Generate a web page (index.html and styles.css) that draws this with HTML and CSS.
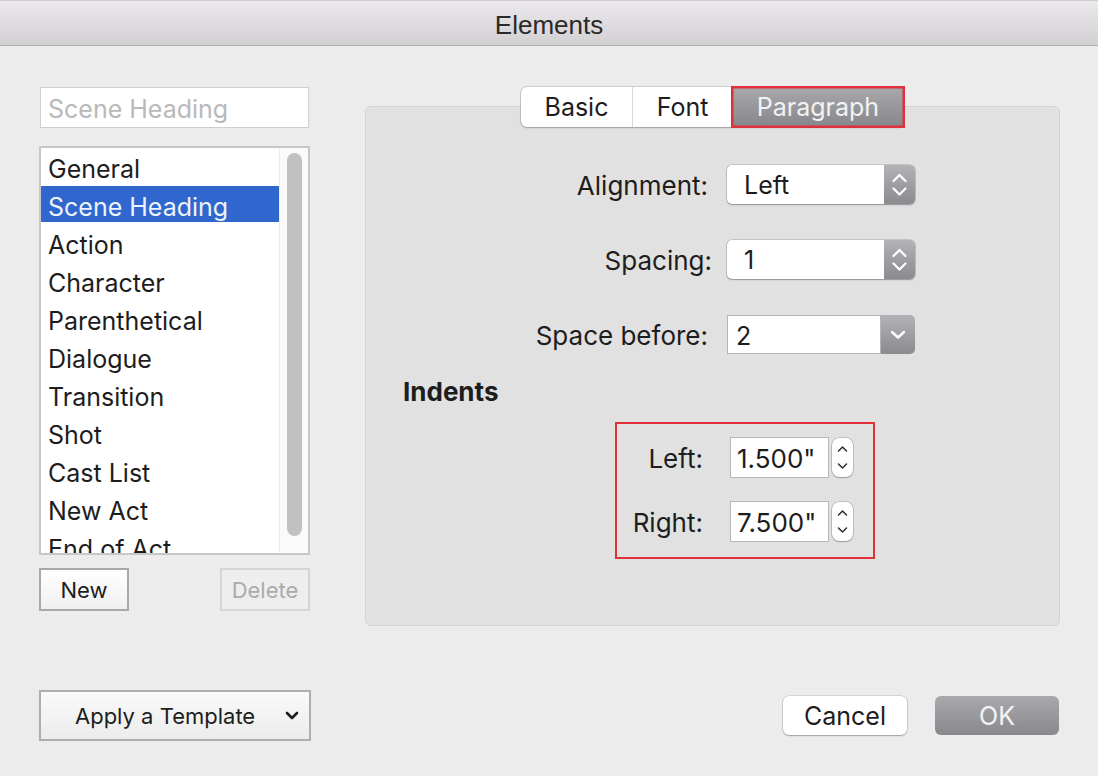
FILE: index.html
```html
<!DOCTYPE html>
<html>
<head>
<meta charset="utf-8">
<title>Elements</title>
<link rel="stylesheet" href="styles.css">
</head>
<body>
<div class="window">
  <header class="titlebar">Elements</header>
  <div class="main">
    <aside class="left">
      <div class="search">Scene Heading</div>
      <div class="list">
        <ul class="items">
          <li>General</li>
          <li class="sel">Scene Heading</li>
          <li>Action</li>
          <li>Character</li>
          <li>Parenthetical</li>
          <li>Dialogue</li>
          <li>Transition</li>
          <li>Shot</li>
          <li>Cast List</li>
          <li>New Act</li>
          <li>End of Act</li>
        </ul>
        <div class="scroll"><div class="thumb"></div></div>
      </div>
      <div class="listbtns">
        <button class="btn">New</button>
        <button class="btn disabled">Delete</button>
      </div>
    </aside>
    <section class="right">
      <div class="tabs">
        <div class="tab basic">Basic</div>
        <div class="tab font">Font</div>
        <div class="tab para">Paragraph</div>
      </div>
      <div class="panel">
        <div class="form">
          <label class="lbl-align">Alignment:</label>
          <div class="popup">
            <span class="val">Left</span>
            <span class="arrows">
              <svg width="31" height="39" viewBox="0 0 31 39"><path d="M9.5 16 L15.5 10 L21.5 16 M9.5 23.5 L15.5 29.5 L21.5 23.5" fill="none" stroke="#fff" stroke-width="2.2" stroke-linecap="round" stroke-linejoin="round"/></svg>
            </span>
          </div>
          <label class="lbl-spacing">Spacing:</label>
          <div class="popup">
            <span class="val">1</span>
            <span class="arrows">
              <svg width="31" height="39" viewBox="0 0 31 39"><path d="M9.5 16 L15.5 10 L21.5 16 M9.5 23.5 L15.5 29.5 L21.5 23.5" fill="none" stroke="#fff" stroke-width="2.2" stroke-linecap="round" stroke-linejoin="round"/></svg>
            </span>
          </div>
          <label class="lbl-before">Space before:</label>
          <div class="combo">
            <span class="val">2</span>
            <span class="down">
              <svg width="34" height="39" viewBox="0 0 34 39"><path d="M11 17 L17 22.5 L23 17" fill="none" stroke="#fff" stroke-width="2.4" stroke-linecap="round" stroke-linejoin="round"/></svg>
            </span>
          </div>
        </div>
        <h3 class="indents-title">Indents</h3>
        <div class="indents">
          <label class="lbl-left">Left:</label>
          <div class="spin">
            <div class="field">1.500"</div>
            <div class="stepper">
              <svg width="21" height="39" viewBox="0 0 21 39"><path d="M6.5 13 L10.5 9 L14.5 13 M6.5 26 L10.5 30 L14.5 26" fill="none" stroke="#333" stroke-width="1.6" stroke-linecap="round" stroke-linejoin="round"/></svg>
            </div>
          </div>
          <label>Right:</label>
          <div class="spin">
            <div class="field">7.500"</div>
            <div class="stepper">
              <svg width="21" height="39" viewBox="0 0 21 39"><path d="M6.5 13 L10.5 9 L14.5 13 M6.5 26 L10.5 30 L14.5 26" fill="none" stroke="#333" stroke-width="1.6" stroke-linecap="round" stroke-linejoin="round"/></svg>
            </div>
          </div>
        </div>
      </div>
    </section>
  </div>
  <footer class="footer">
    <div class="template">
      <span>Apply a Template</span>
      <svg class="chev" width="14" height="9" viewBox="0 0 14 9"><path d="M2 2 L7 7 L12 2" fill="none" stroke="#1d1d1d" stroke-width="2.6" stroke-linecap="round" stroke-linejoin="round"/></svg>
    </div>
    <div class="actions">
      <button class="pbtn cancel">Cancel</button>
      <button class="pbtn ok">OK</button>
    </div>
  </footer>
</div>
</body>
</html>
```
FILE: styles.css
```css
* { box-sizing: border-box; }
html, body { margin: 0; padding: 0; }
body {
  width: 1098px;
  height: 776px;
  overflow: hidden;
  background: #ececec;
  font-family: Inter, "Noto Sans", sans-serif;
  color: #1d1d1d;
}

.titlebar {
  height: 46px;
  padding-top: 5px;
  border-top: 1px solid #cfcdcf;
  border-bottom: 1px solid #b1afb1;
  background: linear-gradient(#ebe9eb, #d2d0d2);
  text-align: center;
  font: 26px/38px "Liberation Sans", sans-serif;
  color: #2a2a2a;
}

.main {
  display: flex;
  padding: 41px 38px 0 39px;
}

/* left column */
.left {
  width: 271px;
  display: flex;
  flex-direction: column;
}
.search {
  height: 41px;
  margin: 0 1px;
  padding: 3px 0 0 7px;
  border: 1px solid #cfcfcf;
  background: #fff;
  font-size: 25px;
  line-height: 36px;
  color: #b9b9b9;
}
.list {
  margin-top: 18px;
  height: 409px;
  border: 2px solid #c7c7c7;
  background: #fff;
  display: flex;
  overflow: hidden;
}
.items {
  list-style: none;
  margin: 0;
  padding: 0;
  flex: 1;
}
.items li {
  height: 36px;
  margin-bottom: 2px;
  line-height: 42px;
  padding-left: 7px;
  font-size: 25px;
  white-space: nowrap;
}
.items li.sel {
  background: #2f67cf;
  color: #eef2fa;
}
.scroll {
  width: 29px;
  background: #fafafa;
  border-left: 1px solid #ececec;
  padding: 5px 6px 0 7px;
}
.thumb {
  height: 383px;
  border-radius: 8px;
  background: #c1c1c1;
}
.listbtns {
  display: flex;
  justify-content: space-between;
  margin-top: 13px;
}
.btn {
  width: 90px;
  height: 43px;
  padding: 0;
  border: 2px solid #a9a9a9;
  background: linear-gradient(#ffffff, #f0f0f0);
  font-family: inherit;
  font-size: 22px;
  color: #1d1d1d;
}
.btn.disabled {
  border-color: #d5d5d5;
  background: #eeeeee;
  color: #ababab;
}

/* right column */
.right {
  flex: 1;
  margin-left: 55px;
  display: flex;
  flex-direction: column;
  align-items: center;
}
.tabs {
  display: flex;
  height: 40px;
  background: #fff;
  border-radius: 6px;
  box-shadow: 0 0 0 1px rgba(0,0,0,0.12), 0 1px 2px rgba(0,0,0,0.2);
  position: relative;
  z-index: 1;
  margin-bottom: -21px;
}
.tab {
  font-size: 25px;
  line-height: 41px;
  text-align: center;
}
.tab.basic { width: 112px; border-right: 1px solid #d9d9d9; }
.tab.font { width: 99px; }
.tab.para {
  width: 172px;
  background: linear-gradient(#a9a9ad, #87878b);
  color: #f2f2f2;
  box-shadow: 0 0 0 1px #e0303a, inset 0 0 0 1.5px #e0303a;
}

.panel {
  width: 695px;
  height: 520px;
  background: #e1e1e1;
  border: 1px solid #d4d4d4;
  border-radius: 6px;
  padding-top: 58px;
}
.form {
  display: grid;
  grid-template-columns: 342px 188px;
  grid-auto-rows: 39px;
  column-gap: 19px;
  row-gap: 36px;
  align-items: center;
}
.form label {
  text-align: right;
  font-size: 26px;
  line-height: 37px;
  padding-top: 2px;
}
.lbl-spacing { margin-right: -4px; }
.popup {
  height: 39px;
  display: flex;
  background: #fff;
  border-radius: 5px;
  overflow: hidden;
  box-shadow: 0 0 0 0.5px rgba(0,0,0,0.25), 0 1px 1.5px rgba(0,0,0,0.25);
}
.popup .val {
  flex: 1;
  padding-left: 17px;
  font-size: 25px;
  line-height: 41px;
}
.popup .arrows {
  width: 31px;
  display: flex;
  background: linear-gradient(#b3b3b7, #8b8b8f);
}
.combo {
  height: 39px;
  display: flex;
}
.combo .val {
  flex: 1;
  background: #fff;
  border: 1px solid #b5b5b5;
  font-size: 25px;
  line-height: 41px;
  padding-left: 8px;
}
.combo .down {
  width: 34px;
  display: flex;
  background: linear-gradient(#b3b3b7, #8b8b8f);
  border-radius: 0 5px 5px 0;
}

.indents-title {
  margin: 22px 0 0 37px;
  font-size: 26px;
  font-weight: 700;
  line-height: 32px;
}
.indents {
  margin: 14px 0 0 249px;
  width: 260px;
  height: 137px;
  border: 2px solid #e0303a;
  padding-top: 13px;
  display: grid;
  grid-template-columns: 86px auto;
  grid-auto-rows: 41px;
  column-gap: 27px;
  row-gap: 23px;
  align-content: start;
  align-items: center;
}
.indents label {
  text-align: right;
  font-size: 26px;
  line-height: 39px;
  padding-top: 2px;
}
.spin {
  display: flex;
  align-items: center;
  gap: 3px;
}
.field {
  width: 99px;
  height: 41px;
  background: #fff;
  border: 1px solid #b8b8b8;
  font-size: 26px;
  line-height: 42px;
  padding-left: 6px;
  white-space: nowrap;
}
.stepper {
  width: 21px;
  height: 39px;
  display: flex;
  background: #fff;
  border-radius: 7px;
  box-shadow: 0 0 0 0.5px rgba(0,0,0,0.3), 0 1px 1px rgba(0,0,0,0.2);
}

/* footer */
.footer {
  display: flex;
  align-items: center;
  justify-content: space-between;
  padding: 0 39px;
  margin-top: 64px;
}
.template {
  width: 272px;
  height: 51px;
  border: 2px solid #aeaeae;
  background: linear-gradient(#fafafa, #ececec);
  display: flex;
  align-items: center;
  padding-left: 34px;
  font-size: 22px;
}
.template .chev {
  margin-left: auto;
  margin-right: 10px;
}
.actions {
  display: flex;
  gap: 28px;
}
.pbtn {
  width: 124px;
  height: 39px;
  border: none;
  border-radius: 6px;
  padding: 0;
  font-family: inherit;
  font-size: 25px;
}
.cancel {
  background: #fff;
  color: #1d1d1d;
  box-shadow: 0 0 0 0.5px rgba(0,0,0,0.2), 0 1px 1.5px rgba(0,0,0,0.25);
}
.ok {
  background: linear-gradient(#a9a9ad, #89898d);
  color: #f4f4f4;
}
```
